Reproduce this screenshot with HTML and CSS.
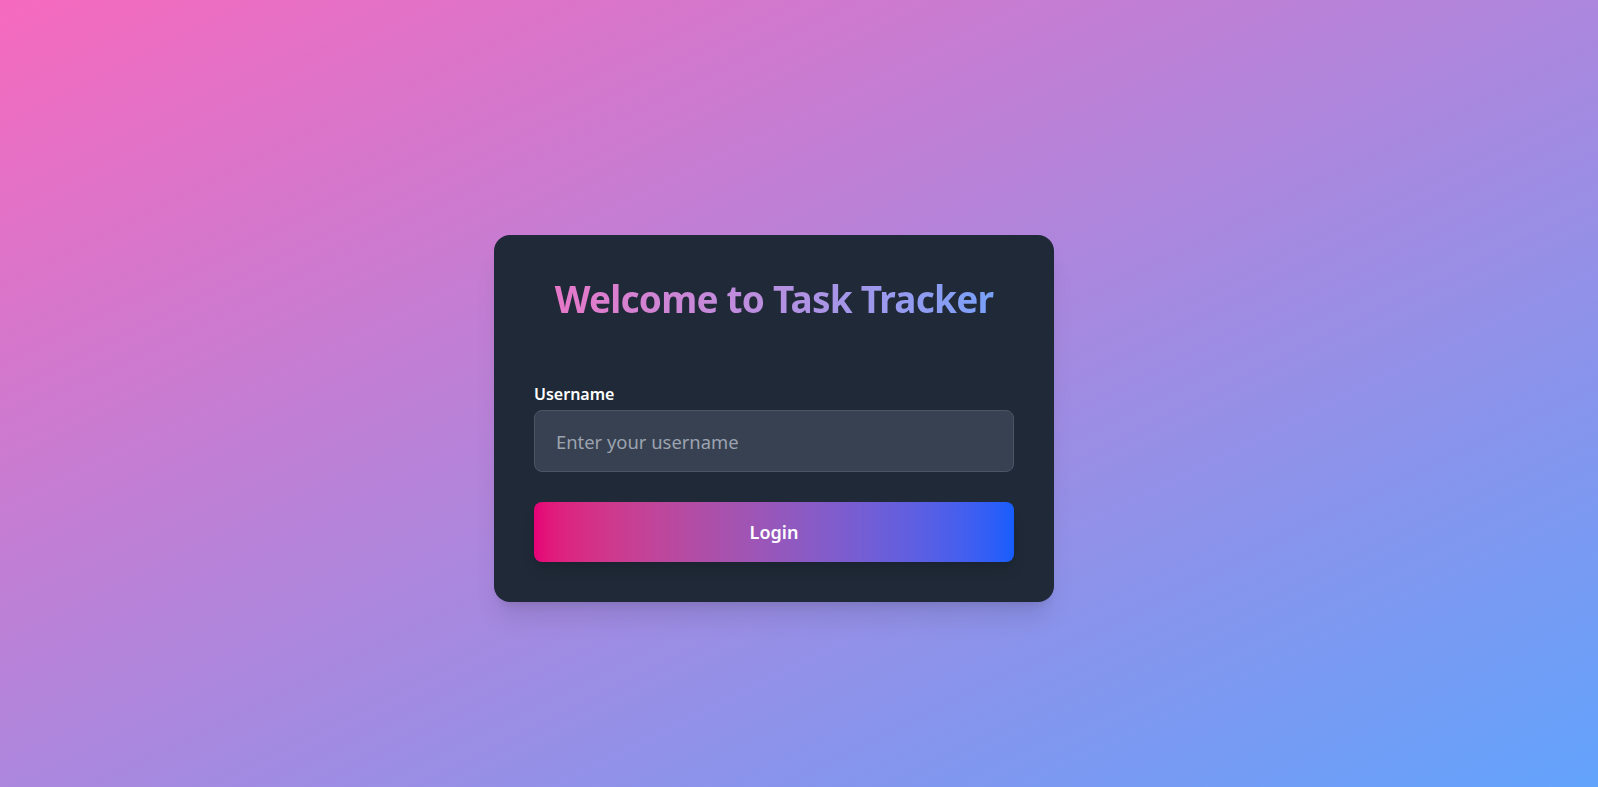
FILE: index.html
```html
<!DOCTYPE html>
<html lang="en">
<head>
<meta charset="utf-8">
<title>Task Tracker</title>
<link rel="stylesheet" href="styles.css">
</head>
<body>
<main class="page">
  <div class="card">
    <h1 class="title">Welcome to Task Tracker</h1>
    <form class="form">
      <label class="label" for="username">Username</label>
      <input class="input" id="username" type="text" placeholder="Enter your username">
      <button class="button" type="button">Login</button>
    </form>
  </div>
</main>
</body>
</html>
```
FILE: styles.css
```css
* { box-sizing: border-box; }
html, body { margin: 0; height: 100%; }
body {
  font-family: "Noto Sans", "Open Sans", sans-serif;
  background: linear-gradient(to bottom right, #f66abe, #62a3fc);
  min-height: 100vh;
}
.page {
  min-height: 100vh;
  display: flex;
  align-items: center;
  justify-content: center;
  padding: 50px 50px 0 0;
}
.card {
  width: 560px;
  background: #1f2937;
  border-radius: 16px;
  padding: 40px;
  box-shadow: 0 20px 25px -5px rgba(0,0,0,0.1), 0 8px 10px -6px rgba(0,0,0,0.1);
}
.title {
  margin: 0 0 59px;
  font-size: 37px;
  line-height: 48px;
  font-weight: 700;
  text-align: center;
  background: linear-gradient(in oklab to right, #ea74c6, #70a2fb);
  -webkit-background-clip: text;
  background-clip: text;
  color: transparent;
  letter-spacing: -0.8px;
}
.form { display: flex; flex-direction: column; }
.label {
  color: #ffffff;
  font-size: 16px;
  line-height: 24px;
  font-weight: 600;
  margin-bottom: 4px;
}
.input {
  height: 62px;
  background: #374151;
  border: 1px solid #4b5563;
  border-radius: 8px;
  padding: 0 21px;
  font-family: inherit;
  font-size: 18.4px;
  color: #fff;
  outline: none;
  margin-bottom: 30px;
}
.input::placeholder { color: #9ca3af; }
.button {
  height: 60px;
  border: none;
  border-radius: 8px;
  background: linear-gradient(in oklab to right, #e60076, #155dfc);
  color: #fff;
  font-family: inherit;
  font-size: 18px;
  font-weight: 600;
  box-shadow: 0 10px 15px -3px rgba(0,0,0,0.1), 0 4px 6px -4px rgba(0,0,0,0.1);
  cursor: pointer;
}
```
